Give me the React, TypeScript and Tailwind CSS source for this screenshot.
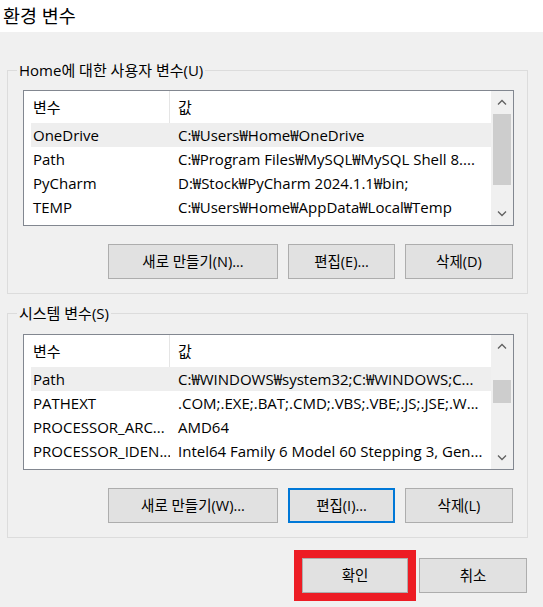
import React from "react";

const FONT = { fontFamily: '"Open Sans", "Noto Sans CJK KR", sans-serif' };

type Row = { name: string; value: string };

const userVars: Row[] = [
  { name: "OneDrive", value: "C:₩Users₩Home₩OneDrive" },
  { name: "Path", value: "C:₩Program Files₩MySQL₩MySQL Shell 8...." },
  { name: "PyCharm", value: "D:₩Stock₩PyCharm 2024.1.1₩bin;" },
  { name: "TEMP", value: "C:₩Users₩Home₩AppData₩Local₩Temp" },
];

const systemVars: Row[] = [
  { name: "Path", value: "C:₩WINDOWS₩system32;C:₩WINDOWS;C..." },
  { name: "PATHEXT", value: ".COM;.EXE;.BAT;.CMD;.VBS;.VBE;.JS;.JSE;.W..." },
  { name: "PROCESSOR_ARC...", value: "AMD64" },
  { name: "PROCESSOR_IDEN...", value: "Intel64 Family 6 Model 60 Stepping 3, Gen..." },
];

const Chevron = ({ up }: { up?: boolean }) => (
  <svg width="10" height="6" viewBox="0 0 10 6" fill="none">
    <polyline
      points={up ? "1,5.5 5,1.5 9,5.5" : "1,0.5 5,4.5 9,0.5"}
      stroke="#606060"
      strokeWidth="1.3"
    />
  </svg>
);

const ListView = ({ rows, thumbTop, thumbHeight }: { rows: Row[]; thumbTop: string; thumbHeight: string }) => (
  <div className="flex h-[136px] w-[491px] border border-[#828790] bg-white">
    <div className="flex-1 overflow-hidden pl-[7px]">
      <div className="flex h-[32px] items-center">
        <div className="flex h-full w-[139px] items-center border-r border-[#e5e5e5] pl-[2px]">변수</div>
        <div className="pl-[8px]">값</div>
      </div>
      {rows.map((r, i) => (
        <div key={r.name} className={`flex h-[24px] items-center whitespace-nowrap ${i === 0 ? "bg-[#eeeeee]" : ""}`}>
          <div className="w-[139px] overflow-hidden pl-[2px]">{r.name}</div>
          <div className="overflow-hidden pl-[8px]">{r.value}</div>
        </div>
      ))}
    </div>
    <div className="flex w-[22px] flex-col bg-[#f0f0f0]">
      <div className="flex h-[22px] items-center justify-center">
        <Chevron up />
      </div>
      <div className="flex-1">
        <div className={`mx-[2px] bg-[#cdcdcd] ${thumbTop} ${thumbHeight}`} />
      </div>
      <div className="flex h-[22px] items-center justify-center">
        <Chevron />
      </div>
    </div>
  </div>
);

const Button = ({ label, w, focused }: { label: string; w: string; focused?: boolean }) => (
  <div
    className={`flex h-[35px] items-center justify-center bg-[#e1e1e1] text-[14.5px] ${w} ${
      focused ? "border-2 border-[#0078d7]" : "border border-[#adadad]"
    }`}
  >
    {label}
  </div>
);

const Group = ({
  legend,
  rows,
  buttons,
  thumbTop,
  thumbHeight,
  className,
}: {
  legend: string;
  rows: Row[];
  buttons: React.ReactNode;
  thumbTop: string;
  thumbHeight: string;
  className: string;
}) => (
  <fieldset className={`ml-[7px] w-[521px] border border-[#dcdcdc] pb-[14px] ${className}`}>
    <legend className="ml-[9px] px-[2px] text-[15px] leading-[20px]">{legend}</legend>
    <div className="pl-[15px]">
      <ListView rows={rows} thumbTop={thumbTop} thumbHeight={thumbHeight} />
      <div className="mt-[18px] flex w-[490px] justify-end gap-[10px]">{buttons}</div>
    </div>
  </fieldset>
);

export default function App() {
  return (
    <div className="h-[607px] w-[543px] overflow-hidden bg-[#f0f0f0] text-[15px] text-black" style={FONT}>
      <div className="flex h-[32px] items-center bg-white pl-[3px] text-[18.5px]">환경 변수</div>
      <div className="pt-[28px]">
        <Group
          legend="Home에 대한 사용자 변수(U)"
          rows={userVars}
          thumbTop="mt-[1px]"
          thumbHeight="h-[71px]"
          className="pt-[10px]"
          buttons={
            <>
              <Button label="새로 만들기(N)..." w="w-[170px]" />
              <Button label="편집(E)..." w="w-[107px]" />
              <Button label="삭제(D)" w="w-[108px]" />
            </>
          }
        />
        <Group
          legend="시스템 변수(S)"
          rows={systemVars}
          thumbTop="mt-[23px]"
          thumbHeight="h-[23px]"
          className="mt-[9px] pt-[11px]"
          buttons={
            <>
              <Button label="새로 만들기(W)..." w="w-[170px]" />
              <Button label="편집(I)..." w="w-[107px]" focused />
              <Button label="삭제(L)" w="w-[108px]" />
            </>
          }
        />
        <div className="mt-[20px] flex justify-end gap-[11px] pr-[16px]">
          <div className="relative">
            <Button label="확인" w="w-[106px]" />
            <div className="pointer-events-none absolute -inset-[8px] border-[8px] border-[#ed1c24]" />
          </div>
          <Button label="취소" w="w-[108px]" />
        </div>
      </div>
    </div>
  );
}
